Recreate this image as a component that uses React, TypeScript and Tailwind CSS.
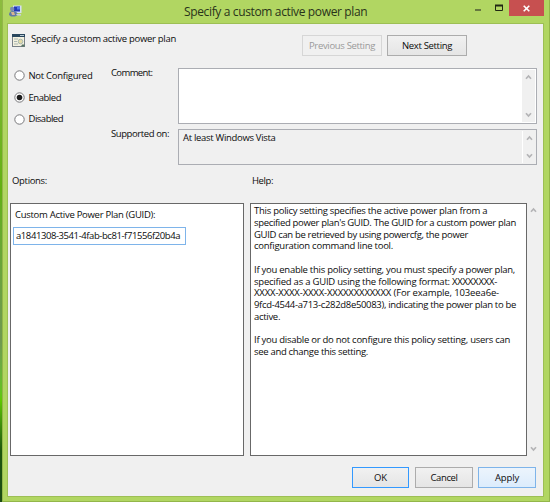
import { ReactNode } from 'react';

function Chevron({ down = false }: { down?: boolean }) {
  return (
    <svg width="7" height="6" viewBox="0 0 7 6" fill="none" stroke="#b4b4b6" strokeWidth="1.7">
      <path d={down ? 'M1 1.2 3.5 4 6 1.2' : 'M1 4.8 3.5 2 6 4.8'} />
    </svg>
  );
}

function ScrollBar({ className = '' }: { className?: string }) {
  return (
    <div className={`flex shrink-0 flex-col items-center justify-between ${className}`}>
      <Chevron />
      <Chevron down />
    </div>
  );
}

function Radio({ label, checked = false, tracking }: { label: string; checked?: boolean; tracking: string }) {
  return (
    <div className="flex h-[21.75px] items-center gap-[3.5px]">
      <svg width="11" height="11" viewBox="0 0 11 11">
        <circle cx="5.5" cy="5.5" r="4.7" fill="#fff" stroke="#77777a" strokeWidth="1" />
        {checked && <circle cx="5.5" cy="5.5" r="2.8" fill="#1c1c1c" />}
      </svg>
      <span className={tracking}>{label}</span>
    </div>
  );
}

function Button({ className, children }: { className: string; children: ReactNode }) {
  return <button className={`flex shrink-0 items-center justify-center border ${className}`}>{children}</button>;
}

const help: [string, string][] = [
  ['This policy setting specifies the active power plan from a', 'tracking-[-0.262px]'],
  ["specified power plan's GUID. The GUID for a custom power plan", 'tracking-[-0.328px]'],
  ['GUID can be retrieved by using powercfg, the power', 'tracking-[-0.33px]'],
  ['configuration command line tool.', 'tracking-[-0.25px]'],
  ['', ''],
  ['If you enable this policy setting, you must specify a power plan,', 'tracking-[-0.262px]'],
  ['specified as a GUID using the following format: XXXXXXXX-', 'tracking-[-0.223px]'],
  ['XXXX-XXXX-XXXX-XXXXXXXXXXXX (For example, 103eea6e-', 'tracking-[-0.137px]'],
  ['9fcd-4544-a713-c282d8e50083), indicating the power plan to be', 'tracking-[-0.318px]'],
  ['active.', 'tracking-[-0.3px]'],
  ['', ''],
  ['If you disable or do not configure this policy setting, users can', 'tracking-[-0.258px]'],
  ['see and change this setting.', 'tracking-[-0.307px]'],
];

export default function App() {
  return (
    <div className="flex h-[502px] w-[550px] overflow-hidden bg-[#b1d662] font-['Open_Sans',sans-serif] text-[9.5px] leading-[12px] whitespace-nowrap text-[#0c0c0c]">
      <div className="flex w-[2px] shrink-0 flex-col">
        <div className="h-[190px] bg-linear-to-b from-[#8dbb3f] to-[#62b010]" />
        <div className="h-[150px] bg-linear-to-b from-[#62b010] to-[#6f9850]" />
        <div className="h-[60px] bg-linear-to-b from-[#6f9850] to-[#5fc800]" />
        <div className="h-[102px] bg-linear-to-b from-[#5fc800] via-[#1c560c] to-[#1c4a14]" />
      </div>
      <div className="flex w-[548px] flex-col border-r border-b border-l border-[#93b64a]">
        <header className="flex h-[23px] shrink-0">
          <svg className="mt-[5px] ml-[6px] shrink-0" width="13" height="12" viewBox="0 0 13 12">
            <rect x="4" y="0.5" width="8.5" height="7.5" fill="#d5def5" />
            <rect x="5" y="1.5" width="6" height="5" fill="#2238b8" />
            <rect x="8" y="1.5" width="3" height="3" fill="#5379e4" />
            <circle cx="3.2" cy="4" r="2.2" fill="#7b8cae" />
            <path d="M0 10q0-4 4-4t5 4l-3 1.5H2z" fill="#607ba5" />
            <path d="M2 7h3l1 3H3z" fill="#d8b692" />
            <path d="M7 9h5v1.5H8z" fill="#c6cde0" />
          </svg>
          <h1 className="ml-[162px] w-[285px] text-[12px] leading-[23px] tracking-[-0.36px] text-[#29331a]">Specify a custom active power plan</h1>
          <svg className="ml-[4px] shrink-0" width="36" height="17" viewBox="0 0 36 17">
            <path d="M2 10h6" stroke="#66793f" strokeWidth="2" />
            <path d="M22.5 5v5.5h7V5" fill="none" stroke="#202713" />
            <path d="M22 5.5h8" stroke="#202713" strokeWidth="2" />
          </svg>
          <div className="flex h-[16px] w-[35px] shrink-0 items-center justify-center bg-[#c75050]">
            <svg width="7" height="7" viewBox="0 0 7 7" stroke="#fff" strokeWidth="1.6"><path d="m.7.7 5.6 5.6M6.3.7.7 6.3" /></svg>
          </div>
        </header>

        <main className="ml-[4px] flex h-[474px] w-[537px] flex-col border border-[#9dbf55] bg-[#f0f0f0]">
          <div className="flex h-[44px] shrink-0 pt-[10px]">
            <svg className="ml-[4px] shrink-0" width="14" height="14" viewBox="0 0 14 14">
              <rect x="0.5" y="0.5" width="12" height="12" fill="#f4f1df" stroke="#788087" />
              <path d="M0 0h13v3H0z" fill="#29465d" />
              <path d="M8 1.5h4" stroke="#b9cbd5" />
              <path d="M2 5h4M2 7.5h3M2 10h4" stroke="#a9b5b2" />
              <circle cx="8.5" cy="7.5" r="2.3" fill="#e3dba8" stroke="#a9bab2" />
              <path d="M10 10.5h2.5v2H9z" fill="#567364" />
            </svg>
            <span className="mt-[-1px] ml-[5px] w-[271px] tracking-[-0.288px]">Specify a custom active power plan</span>
            <Button className="mt-px h-[21px] w-[80px] border-[#d6d6d6] text-[#9a9a9a] tracking-[-0.33px]">Previous Setting</Button>
            <Button className="mt-px ml-[5px] h-[21px] w-[80px] border-[#acacac] bg-linear-to-b from-[#f1f1f1] to-[#e5e5e5] tracking-[-0.33px]">Next Setting</Button>
          </div>

          <section className="flex h-[98px] shrink-0">
            <div className="-mt-[3px] ml-[6px] w-[97px] shrink-0">
              <Radio label="Not Configured" tracking="tracking-[-0.278px]" />
              <Radio label="Enabled" checked tracking="tracking-[-0.46px]" />
              <Radio label="Disabled" tracking="tracking-[-0.49px]" />
            </div>
            <div className="-mt-px w-[67px] shrink-0">
              <div className="h-[61px] tracking-[-0.61px]">Comment:</div>
              <div className="tracking-[-0.41px]">Supported on:</div>
            </div>
            <div className="flex w-[359px] flex-col gap-[5px]">
              <div className="flex h-[56px] justify-end border border-[#abadb3] bg-white p-px">
                <ScrollBar className="w-[13px] bg-[#f0f0f0] py-[4px]" />
              </div>
              <div className="flex h-[36px] justify-between border border-[#abadb3] p-px">
                <span className="mt-px ml-[3px] tracking-[-0.314px]">At least Windows Vista</span>
                <ScrollBar className="w-[13px] border-l border-white py-[4px]" />
              </div>
            </div>
          </section>

          <div className="flex h-[37px] shrink-0 pt-[9px]">
            <span className="ml-[4px] w-[240px] tracking-[-0.32px]">Options:</span>
            <span className="tracking-[-0.41px]">Help:</span>
          </div>

          <section className="ml-[2px] flex h-[253px] shrink-0">
            <div className="w-[234px] shrink-0 border border-[#686868] bg-white pt-[5px] pl-[2px]">
              <div className="ml-[2px] h-[18px] tracking-[-0.28px]">Custom Active Power Plan (GUID):</div>
              <div className="h-[18px] w-[173px] border border-[#7eb4ea] pl-[2px] leading-[15px] tracking-[-0.42px]">a1841308-3541-4fab-bc81-f71556f20b4a</div>
            </div>
            <div className="ml-[6px] w-[277px] shrink-0 border border-[#686868] bg-white pt-[1px] pl-[3px]">
              {help.map(([text, tracking], i) => (
                <div key={i} className={`h-[11.78px] leading-[12px] ${tracking}`}>{text}</div>
              ))}
            </div>
            <ScrollBar className="ml-[2px] w-[9px] py-[4px]" />
          </section>

          <footer className="mt-[11px] ml-[344px] flex">
            <Button className="h-[21px] w-[57px] border-[#3399ff] bg-linear-to-b from-[#f1f1f1] to-[#e5e5e5] tracking-[-0.1px]">OK</Button>
            <Button className="ml-[6px] h-[21px] w-[58px] border-[#acacac] bg-linear-to-b from-[#f1f1f1] to-[#e5e5e5] tracking-[-0.4px]">Cancel</Button>
            <Button className="ml-[5px] h-[21px] w-[58px] border-[#7eb4ea] bg-linear-to-b from-[#ecf4fc] to-[#dcecfc] tracking-[-0.16px]">Apply</Button>
          </footer>
        </main>
      </div>
    </div>
  );
}
